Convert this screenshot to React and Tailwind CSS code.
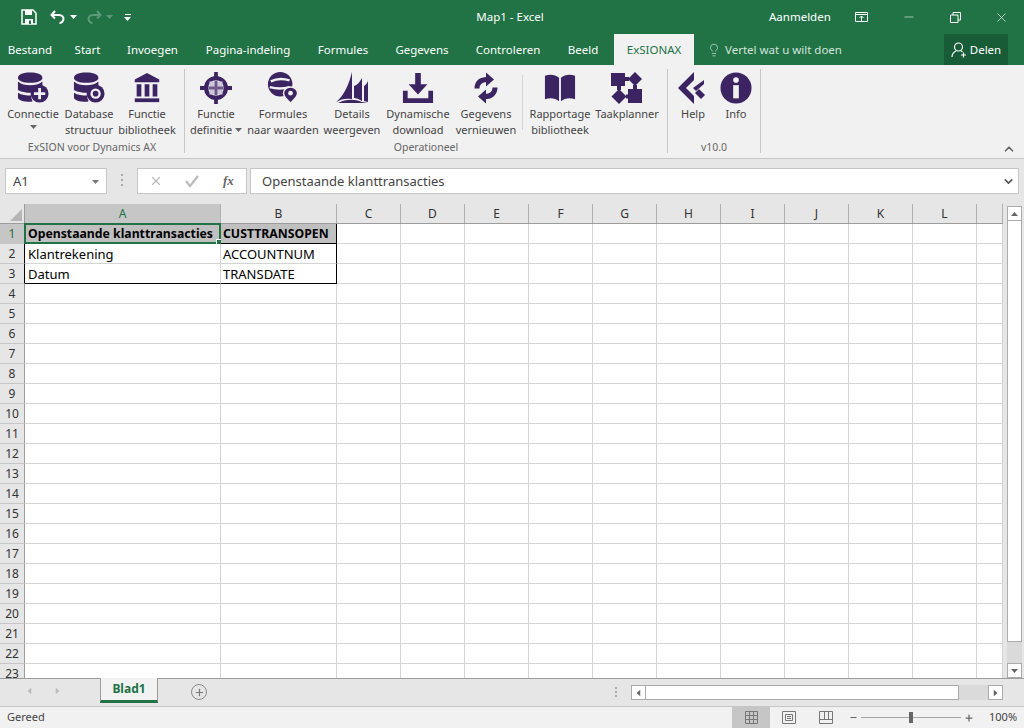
import { ChevronDown, ChevronUp, Lightbulb, Minus, Plus, X } from "lucide-react";

const PURPLE = "#3c2361";

const tabs = [
  ["Bestand", "w-[60px]"],
  ["Start", "w-[55px]"],
  ["Invoegen", "w-[75px]"],
  ["Pagina-indeling", "w-[116px]"],
  ["Formules", "w-[74px]"],
  ["Gegevens", "w-[84px]"],
  ["Controleren", "w-[88px]"],
  ["Beeld", "w-[62px]"],
];

const Caret = ({ className = "" }) => (
  <svg width="7" height="4" viewBox="0 0 7 4" className={className}>
    <path d="M0 0h7L3.500 4z" fill="currentColor" />
  </svg>
);

function Db({ children }) {
  return (
    <svg width="32" height="32" viewBox="0 0 34 34" fill={PURPLE}>
      <path d="M1 6c0-3.500 6-5.500 13-5.500S27 2.500 27 6s-6 5.500-13 5.500S1 9.500 1 6z" />
      <path d="M1 10c3 3 8 4 13 4s10-1 13-4v5c-3 2-6 3-9 3.500-1 1-2 2-2.500 3.500C9 22 4 21 1 19z" />
      <path d="M1 22c4 2.500 9 3 14 3 0 2 .5 4 1.500 6-1 .5-1.500.5-2.500.5-7 0-13-1.500-13-4.500z" />
      {children}
    </svg>
  );
}

const icons = {
  connect: (
    <Db>
      <circle cx="24" cy="23" r="9.500" />
      <path d="M22.500 17h3v4.500H30v3h-4.500V29h-3v-4.500H18v-3h4.500z" fill="#f1f1f1" />
    </Db>
  ),
  database: (
    <Db>
      <circle cx="24" cy="23" r="9.500" />
      <circle cx="24" cy="23" r="5.500" fill="#f1f1f1" />
      <circle cx="24" cy="23" r="3" />
    </Db>
  ),
  library: (
    <svg width="32" height="32" viewBox="0 0 34 34" fill={PURPLE}>
      <path d="M17 1l13 7v3H4V8z" />
      <path d="M6 13h5v13H6zM14.500 13h5v13h-5zM23 13h5v13h-5z" />
      <path d="M4 28h26v4H4z" />
    </svg>
  ),
  target: (
    <svg width="32" height="32" viewBox="0 0 34 34">
      <circle cx="17" cy="17" r="10.500" fill="none" stroke={PURPLE} strokeWidth="4.500" />
      <path d="M15 0h4v8h-4zM15 26h4v8h-4zM0 15h8v4H0zM26 15h8v4h-8z" fill={PURPLE} />
      <path d="M10 10h14v14H10z" fill="#cfc7db" />
      <path d="M15.500 9h3v16h-3zM9 15.500h16v3H9z" fill="#6d5a8a" />
    </svg>
  ),
  pin: (
    <svg width="32" height="32" viewBox="0 0 34 34" fill={PURPLE}>
      <circle cx="14" cy="13" r="13" />
      <path d="M4 10c6-3 14-3 20-1M3 16c7 2 14 2 21 0" stroke="#f1f1f1" strokeWidth="2.500" fill="none" />
      <path d="M25 16c4.500 0 7.500 3 7.500 6.500 0 3.500-4 7-7.500 10.500-3.500-3.500-7.500-7-7.500-10.500 0-3.500 3-6.500 7.500-6.500z" stroke="#f1f1f1" strokeWidth="1.500" />
      <circle cx="25" cy="22.500" r="2.500" fill="#f1f1f1" />
    </svg>
  ),
  sails: (
    <svg width="32" height="32" viewBox="0 0 32 32" fill={PURPLE}>
      <path d="M16 0v27C10 26 5 27 0 30 8 24 13 12 16 0z" />
      <path d="M26 6v23c-3-2-6-3-8-3V14c3-1 6-4 8-8z" />
      <path d="M32 9v21l-4-1V14c2-1 3-3 4-5z" />
      <path d="M2 31c8-4 16-4 24-1l6 1z" />
    </svg>
  ),
  download: (
    <svg width="32" height="32" viewBox="0 0 34 34" fill={PURPLE}>
      <path d="M14 1h6v12h7L17 24 7 13h7z" />
      <path d="M1 20h5v8h22v-8h5v13H1z" />
    </svg>
  ),
  refresh: (
    <svg width="24" height="32" viewBox="0 0 24 31" fill={PURPLE}>
      <path d="M12 0l8 7-8 7z" />
      <path d="M3 16c0-6 4-9 10-9" fill="none" stroke={PURPLE} strokeWidth="5" />
      <path d="M12 17l-8 7 8 7z" />
      <path d="M21 15c0 6-4 9-10 9" fill="none" stroke={PURPLE} strokeWidth="5" />
    </svg>
  ),
  book: (
    <svg width="32" height="32" viewBox="0 0 34 34" fill={PURPLE}>
      <path d="M1 4c6-2 11-1 15 2v25c-4-3-9-4-15-2z" />
      <path d="M33 4c-6-2-11-1-15 2v25c4-3 9-4 15-2z" />
    </svg>
  ),
  planner: (
    <svg width="32" height="32" viewBox="0 0 32 32" fill={PURPLE}>
      <path d="M0 1h14v13H0z" />
      <path d="M14 5h4v4h-4z" />
      <path d="M24 0l7 7-7 7-7-7z" />
      <path d="M22 13h4v5h-4z" />
      <path d="M17 17h14v14H17z" />
      <path d="M6 13h4v5H6z" />
      <path d="M8 17l7.500 7.500L8 32 .5 24.500z" />
      <path d="M15 22.500h3v4h-3z" />
    </svg>
  ),
  help: (
    <svg width="32" height="32" viewBox="0 0 32 32" fill={PURPLE}>
      <path d="M1 16L17 0v8l-8 8 8 8v8z" />
      <path d="M27 8l-11 8 3 3 8-7z" />
      <path d="M18 21l4-4 6 6-4 4z" />
    </svg>
  ),
  info: (
    <svg width="32" height="32" viewBox="0 0 34 34">
      <circle cx="17" cy="17" r="16.500" fill={PURPLE} />
      <circle cx="17" cy="8.500" r="3" fill="#f1f1f1" />
      <path d="M14 14h6v14h-6z" fill="#f1f1f1" />
    </svg>
  ),
};

function RibbonBtn({ icon, label, second, caret, width }) {
  return (
    <div className={`flex shrink-0 flex-col items-center ${width}`}>
      <div className="mt-[3px] flex h-[32px] items-center justify-center">{icons[icon]}</div>
      <div className="mt-[2px] whitespace-nowrap leading-[16px]">{label}</div>
      <div className="flex items-center gap-[3px] whitespace-nowrap leading-[16px]">
        {second}
        {caret && <Caret className="text-[#666]" />}
      </div>
    </div>
  );
}

const Group = ({ title, children, width }) => (
  <div className={`mb-[5px] flex shrink-0 flex-col border-r border-[#c6c6c6] ${width}`}>
    <div className="flex h-[72px] items-start">{children}</div>
    <div className="text-center text-[10.500px] leading-[12px] text-[#666]">{title}</div>
  </div>
);

function TitleBar() {
  return (
    <div className="flex h-[34px] items-center bg-[#217346] text-[11.500px] text-white">
      <svg width="16" height="16" viewBox="0 0 16 16" className="ml-[21px]" fill="none">
        <path d="M1 1h11l3 3v11H1z" stroke="white" strokeWidth="1.500" />
        <path d="M4 1h7v5H4z" fill="white" />
        <path d="M4 10h8v5H4z" fill="white" />
        <path d="M8 11.500h2V15H8z" fill="#217346" />
      </svg>
      <svg width="16" height="14" viewBox="0 0 16 14" className="ml-[13px]" fill="none" stroke="white" strokeWidth="2">
        <path d="M5 1L1.500 5 5 8.500" />
        <path d="M2 5h7c3 0 4.500 2 4.500 4s-2 4-4 4" />
      </svg>
      <Caret className="ml-[4px] text-white" />
      <svg width="16" height="14" viewBox="0 0 16 14" className="ml-[9px]" fill="none" stroke="#5b9a78" strokeWidth="2">
        <path d="M11 1l3.500 4L11 8.500" />
        <path d="M14 5H7C4 5 2.500 7 2.500 9s2 4 4 4" />
      </svg>
      <Caret className="ml-[4px] text-[#5b9a78]" />
      <div className="ml-[11px] flex flex-col items-center gap-[2px]">
        <div className="h-px w-[6px] bg-white" />
        <Caret className="text-white" />
      </div>
      <div className="ml-[339px] w-[80px] whitespace-nowrap text-center">Map1 - Excel</div>
      <div className="ml-[219px] w-[62px] whitespace-nowrap">Aanmelden</div>
      <svg width="14" height="11" viewBox="0 0 14 11" className="ml-[24px]" fill="none" stroke="white">
        <path d="M.5.5h12v9H.5zM.5 2.500h12M6.500 9V4M4.500 6l2-2 2 2" />
      </svg>
      <Minus size={14} strokeWidth={1} className="ml-[33px]" />
      <svg width="11" height="11" viewBox="0 0 11 11" className="ml-[34px]" fill="none" stroke="white">
        <path d="M.5 3h7.500v7.500H.5zM3 3V.5h7.500V8H8" />
      </svg>
      <X size={15} strokeWidth={1} className="ml-[33px]" />
    </div>
  );
}

function TabBar() {
  return (
    <div className="flex h-[31px] items-stretch bg-[#217346] text-[11.500px] text-white">
      {tabs.map(([name, w]) => (
        <div key={name} className={`flex items-center justify-center ${w}`}>
          {name}
        </div>
      ))}
      <div className="flex w-[80px] items-center justify-center bg-[#f1f1f1] text-[#217346]">ExSIONAX</div>
      <div className="ml-[13px] flex w-[237px] items-center gap-[4px] text-[#d3e3da]">
        <Lightbulb size={14} strokeWidth={1.2} />
        Vertel wat u wilt doen
      </div>
      <div className="flex w-[64px] items-center justify-center gap-[3px] bg-[#185c37]">
        <svg width="16" height="16" viewBox="0 0 16 16" fill="none" stroke="white" strokeWidth="1.200">
          <circle cx="7.500" cy="5" r="4" />
          <path d="M1 15c0-3 2-5 4-6M10 9c.500.200 1 .500 1.500 1M10 13h5M12.500 10.500v5" />
        </svg>
        Delen
      </div>
    </div>
  );
}

function Ribbon() {
  return (
    <div className="flex h-[94px] border-b border-[#c6c6c6] bg-[#f1f1f1] pt-[4px] text-[11px] text-[#444]">
      <Group title="ExSION voor Dynamics AX" width="w-[185px]">
        <div className="w-[4px]" />
        <RibbonBtn icon="connect" label="Connectie" second={<Caret className="mt-[3px] text-[#666]" />} width="w-[58px]" />
        <RibbonBtn icon="database" label="Database" second="structuur" width="w-[54px]" />
        <RibbonBtn icon="library" label="Functie" second="bibliotheek" width="w-[62px]" />
      </Group>
      <Group title="Operationeel" width="w-[483px]">
        <div className="w-[2px]" />
        <RibbonBtn icon="target" label="Functie" second="definitie" caret width="w-[58px]" />
        <RibbonBtn icon="pin" label="Formules" second="naar waarden" width="w-[76px]" />
        <RibbonBtn icon="sails" label="Details" second="weergeven" width="w-[62px]" />
        <RibbonBtn icon="download" label="Dynamische" second="download" width="w-[70px]" />
        <RibbonBtn icon="refresh" label="Gegevens" second="vernieuwen" width="w-[66px]" />
        <div className="mx-[3px] mt-[6px] h-[55px] w-px bg-[#d4d4d4]" />
        <RibbonBtn icon="book" label="Rapportage" second="bibliotheek" width="w-[68px]" />
        <RibbonBtn icon="planner" label="Taakplanner" second="" width="w-[66px]" />
      </Group>
      <Group title="v10.0" width="w-[93px]">
        <div className="w-[4px]" />
        <RibbonBtn icon="help" label="Help" second="" width="w-[42px]" />
        <RibbonBtn icon="info" label="Info" second="" width="w-[44px]" />
      </Group>
      <ChevronUp size={14} strokeWidth={3} className="ml-auto mr-[8px] mt-[73px] text-[#666]" />
    </div>
  );
}

function FormulaBar() {
  return (
    <div className="flex h-[45px] items-start bg-[#e6e6e6] pl-[5px] pr-[5px] pt-[9px] text-[13px] text-[#444]">
      <div className="flex h-[26px] w-[102px] items-center justify-between border border-[#c6c6c6] bg-white px-[7px] pt-px">
        A1
        <Caret className="text-[#777]" />
      </div>
      <div className="mx-[13px] mt-[6px] flex w-[4px] flex-col items-center gap-[3px]">
        <div className="h-[2px] w-[2px] bg-[#aaa]" />
        <div className="h-[2px] w-[2px] bg-[#aaa]" />
        <div className="h-[2px] w-[2px] bg-[#aaa]" />
      </div>
      <div className="flex h-[26px] w-[110px] items-center border border-[#c6c6c6] bg-white pl-[11px] text-[#bbb]">
        <X size={14} strokeWidth={2} />
        <svg width="14" height="14" viewBox="0 0 14 14" className="ml-[22px]" fill="none" stroke="#bbb" strokeWidth="2.200">
          <path d="M1 7l4 5 8-10" />
        </svg>
        <span className="ml-[24px] font-['Liberation_Serif',serif] text-[13px] font-bold italic text-[#666]">fx</span>
      </div>
      <div className="ml-[3px] flex h-[26px] flex-1 items-center justify-between border border-[#c6c6c6] bg-white pl-[11px] pr-[3px] pt-px">
        Openstaande klanttransacties
        <ChevronDown size={13} strokeWidth={3} className="text-[#555]" />
      </div>
    </div>
  );
}

const cols = ["A", "B", "C", "D", "E", "F", "G", "H", "I", "J", "K", "L", ""];
const colWidths = "grid-cols-[25px_196px_116px_repeat(10,64px)_26px]";

const cells = {
  1: ["Openstaande klanttransacties", "CUSTTRANSOPEN"],
  2: ["Klantrekening", "ACCOUNTNUM"],
  3: ["Datum", "TRANSDATE"],
};

function Row({ n }) {
  const data = cells[n];
  return (
    <div className={`grid h-5 grid-rows-[20px] ${colWidths}`}>
      <div
        className={`flex items-center justify-center border-b border-r border-b-[#c6c6c6] pt-px text-[12px] leading-[18px] ${
          data && n > 1 ? "border-r-black" : "border-r-[#9c9c9c]"
        } ${n === 1 ? "bg-[#c6c6c6] text-[#217346]" : "bg-[#e6e6e6] text-[#333]"}`}
      >
        {n}
      </div>
      {cols.map((c, i) => {
        const inTable = data && i < 2;
        const border = (n === 1 || n === 3) && i < 2 ? "border-b-black" : "border-b-[#d4d4d4]";
        return (
          <div
            key={c + i}
            className={`relative flex items-center whitespace-nowrap border-b border-r pt-px leading-[18px] text-black ${border} ${
              inTable && i === 1 ? "border-r-black pl-[2px]" : "border-r-[#d4d4d4] pl-[3px]"
            } ${n === 1 && i < 2 ? "bg-[#c0c0c0] text-[12.250px] font-bold" : "text-[13px]"}`}
          >
            {inTable ? data[i] : ""}
            {n === 1 && i === 0 && (
              <div className="absolute -left-[1px] -top-[1px] bottom-[-1px] right-[-1px] border-2 border-[#217346]">
                <div className="absolute -bottom-[3px] -right-[3px] h-[6px] w-[6px] border border-white bg-[#217346]" />
              </div>
            )}
          </div>
        );
      })}
    </div>
  );
}

function Sheet() {
  return (
    <div className="flex h-[474px]">
      <div className="w-[1003px] overflow-hidden bg-white">
        <div className={`grid h-[20px] ${colWidths} border-b border-[#9c9c9c] bg-[#e6e6e6]`}>
          <div className="relative border-r border-[#9c9c9c]">
            <div className="absolute bottom-[2px] right-[2px] h-0 w-0 border-b-[12px] border-l-[12px] border-b-[#b5b5b5] border-l-transparent" />
          </div>
          {cols.map((c, i) => (
            <div
              key={c + i}
              className={`flex items-center justify-center border-r border-[#b0b0b0] text-[12px] ${
                i === 0 ? "bg-[#c6c6c6] text-[#217346]" : "text-[#333]"
              }`}
            >
              {c}
            </div>
          ))}
        </div>
        {Array.from({ length: 23 }, (_, i) => (
          <Row key={i} n={i + 1} />
        ))}
      </div>
      <div className="flex w-[21px] flex-col items-center bg-[#e6e6e6] pl-[1px] pt-[2px]">
        <div className="flex h-[15px] w-[15px] items-center justify-center border border-[#ababab] bg-white text-[#666]">
          <Caret className="rotate-180" />
        </div>
        <div className="h-[421px] w-[15px] border-x border-b border-[#ababab] bg-white" />
        <div className="w-[15px] flex-1 bg-[#dadada]" />
        <div className="flex h-[15px] w-[15px] items-center justify-center border border-[#ababab] bg-white text-[#666]">
          <Caret />
        </div>
      </div>
    </div>
  );
}

function SheetTabs() {
  return (
    <div className="flex h-[29px] items-start border-y border-b-[#c6c6c6] border-t-[#9c9c9c] bg-[#e6e6e6]">
      <Caret className="ml-[26px] mt-[10px] rotate-90 text-[#bbb]" />
      <Caret className="ml-[21px] mt-[10px] -rotate-90 text-[#bbb]" />
      <div className="-mt-px ml-[39px] flex h-[25px] w-[58px] items-center justify-center border-x border-b-[3px] border-x-[#9c9c9c] border-b-[#217346] bg-[#f2f2f2] text-[12px] font-bold text-[#217346]">
        Blad1
      </div>
      <div className="ml-[33px] mt-[5px] flex h-[16px] w-[16px] items-center justify-center rounded-full border-[1.500px] border-[#8a8a8a] text-[#777]">
        <Plus size={11} strokeWidth={2.500} />
      </div>
      <div className="ml-[408px] mt-[8px] flex w-[3px] flex-col gap-[2px]">
        <div className="h-[2px] w-[2px] bg-[#aaa]" />
        <div className="h-[2px] w-[2px] bg-[#aaa]" />
        <div className="h-[2px] w-[2px] bg-[#aaa]" />
      </div>
      <div className="ml-[13px] mt-[6px] flex h-[15px] w-[372px] items-stretch bg-[#dadada] text-[#666]">
        <div className="flex w-[15px] items-center justify-center border border-[#ababab] bg-white">
          <Caret className="rotate-90" />
        </div>
        <div className="w-[313px] border-y border-r border-[#ababab] bg-white" />
        <div className="flex-1" />
        <div className="flex w-[15px] items-center justify-center border border-[#ababab] bg-white">
          <Caret className="-rotate-90" />
        </div>
      </div>
    </div>
  );
}

function StatusBar() {
  return (
    <div className="flex h-[21px] items-center bg-[#f1f1f1] text-[11px] text-[#444]">
      <div className="ml-[7px] w-[725px]">Gereed</div>
      <div className="flex h-full w-[38px] items-center justify-center bg-[#c6c6c6]">
        <svg width="13" height="13" viewBox="0 0 13 13" fill="none" stroke="#777">
          <path d="M.5.5h12v12H.5zM4.500.5v12M8.500.5v12M.5 4.500h12M.5 8.500h12" />
        </svg>
      </div>
      <svg width="14" height="13" viewBox="0 0 14 13" className="ml-[12px]" fill="none" stroke="#777">
        <path d="M.5.5h13v12H.5zM3.500 3.500h7v6h-7zM5 5.500h4M5 7.500h4" />
      </svg>
      <svg width="14" height="13" viewBox="0 0 14 13" className="ml-[23px]" fill="none" stroke="#777">
        <path d="M.5.5h13v12H.5zM.5 8.500h13M5.500.5v8M9.500.5v8" />
      </svg>
      <Minus size={9} strokeWidth={3} className="ml-[16px] text-[#666]" />
      <div className="ml-[3px] flex h-[13px] w-[100px] items-center justify-center bg-[linear-gradient(#0000_6px,#a6a6a6_6px,#a6a6a6_7px,#0000_7px)]">
        <div className="h-[11px] w-[4px] bg-[#666]" />
      </div>
      <Plus size={10} strokeWidth={3} className="ml-[3px] text-[#666]" />
      <div className="ml-[15px]">100%</div>
    </div>
  );
}

export default function App() {
  return (
    <div className="h-[728px] w-[1024px] overflow-hidden bg-[#e6e6e6] font-['Noto_Sans','Open_Sans',sans-serif]">
      <TitleBar />
      <TabBar />
      <Ribbon />
      <FormulaBar />
      <Sheet />
      <SheetTabs />
      <StatusBar />
    </div>
  );
}
